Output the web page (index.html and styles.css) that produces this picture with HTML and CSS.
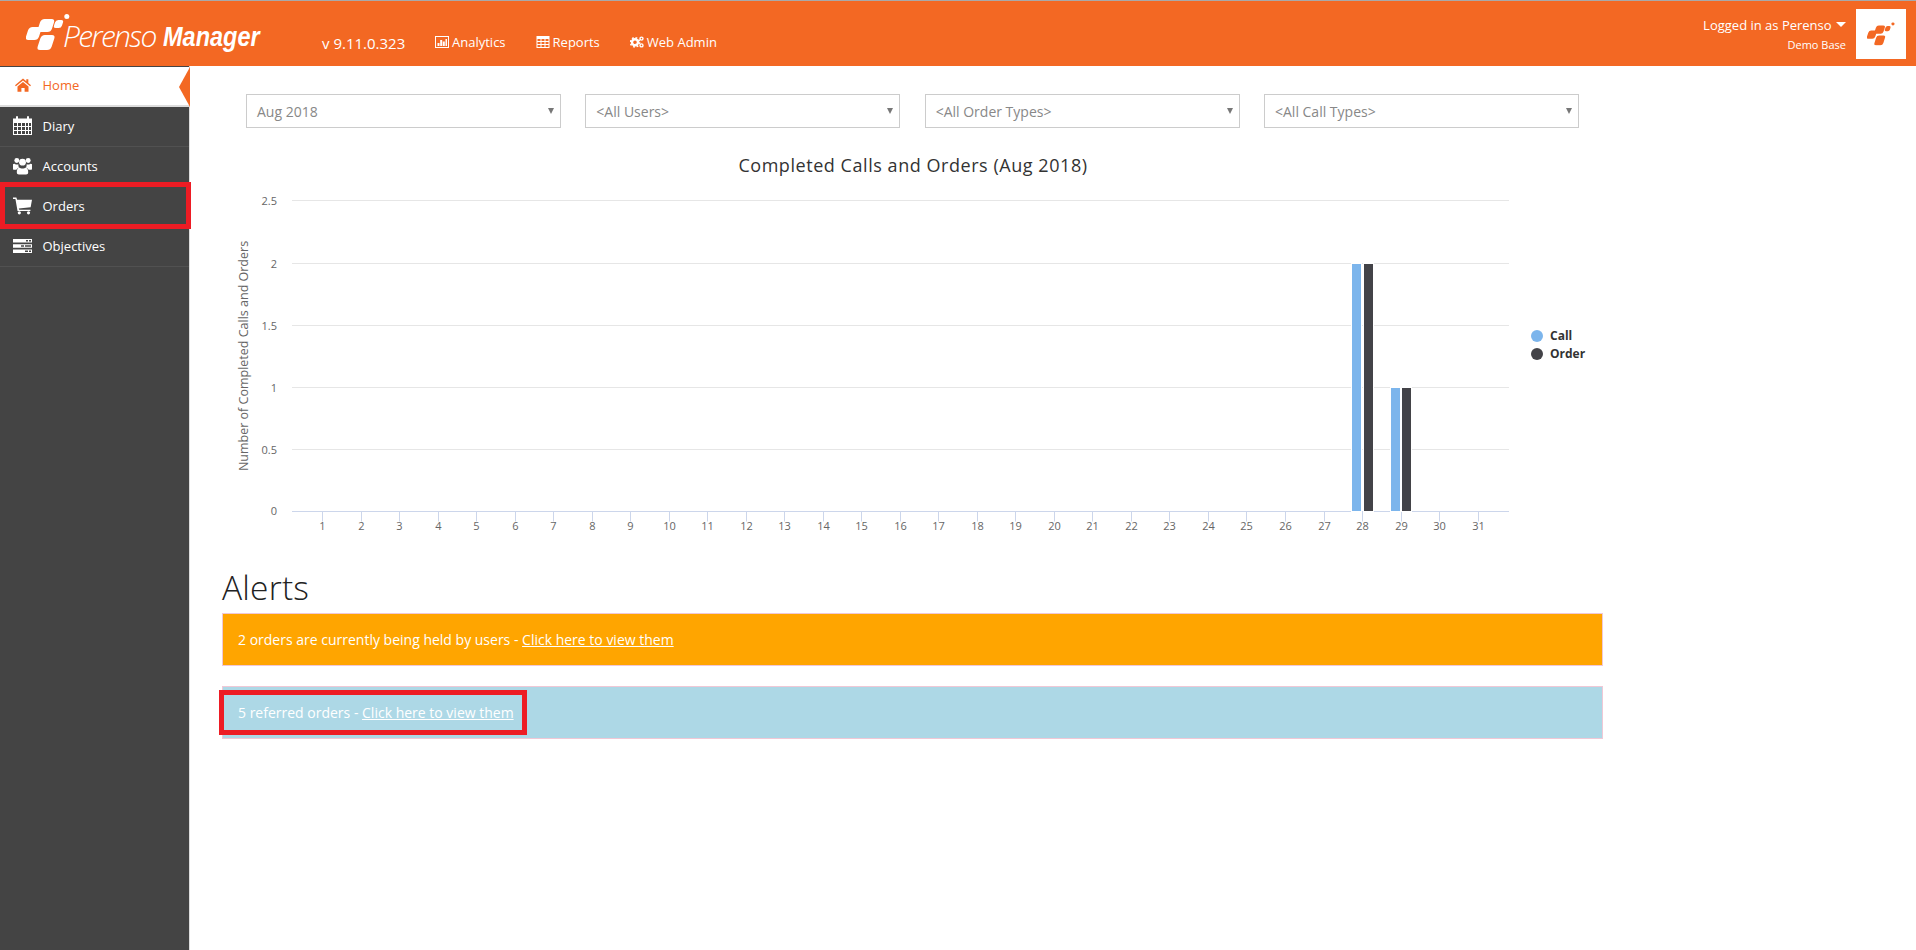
FILE: index.html
```html
<!DOCTYPE html>
<html lang="en">
<head>
<meta charset="utf-8">
<title>Perenso Manager</title>
<link rel="stylesheet" href="styles.css">
</head>
<body>
<svg class="defs" aria-hidden="true">
  <symbol id="mark" viewBox="0 0 44 37">
    <g fill="currentColor">
      <rect x="-6.500" y="-6.500" width="13" height="13" rx="3.500" transform="translate(7.500 19.500) skewX(-18)"/>
      <rect x="-7" y="-6.500" width="14" height="13" rx="3.500" transform="translate(20 11.500) skewX(-18)"/>
      <rect x="-7" y="-7.500" width="14" height="15" rx="3.500" transform="translate(20 28.500) skewX(-18)"/>
      <rect x="-4" y="-4" width="8" height="8" rx="2.500" transform="translate(32.500 10) skewX(-18)"/>
      <circle cx="40.800" cy="2.500" r="2.500"/>
    </g>
  </symbol>
</svg>

<header class="topbar">
  <div class="brand">
    <svg class="brand-mark" viewBox="0 0 44 37"><use href="#mark"/></svg>
    <span class="brand-thin">Perenso</span>
    <span class="brand-bold">Manager</span>
  </div>
  <span class="version">v 9.11.0.323</span>
  <nav class="topnav">
    <a class="topnav-item">
      <svg class="topnav-icon" viewBox="0 0 14 12"><path class="ico-w" fill-rule="evenodd" d="M0 0h14v12H0zM1 1v10h12V1z"/><path class="ico-w" d="M2.500 7h2v3h-2zM5.200 4h2v6h-2zM7.800 5.500h2V10h-2zM10.500 3h1.500v7h-1.500z"/></svg>
      Analytics
    </a>
    <a class="topnav-item">
      <svg class="topnav-icon" viewBox="0 0 13 12"><path class="ico-w" fill-rule="evenodd" d="M0 0h13v12H0zM1 3v2h3V3zM5 3v2h3V3zM9 3v2h3V3zM1 6v2h3V6zM5 6v2h3V6zM9 6v2h3V6zM1 9v2h3V9zM5 9v2h3V9zM9 9v2h3V9z"/></svg>
      Reports
    </a>
    <a class="topnav-item">
      <svg class="topnav-icon" viewBox="0 0 14 12"><circle class="ico-ring" cx="5" cy="6.300" r="3" stroke-width="2.400"/><circle class="ico-dash" cx="5" cy="6.300" r="4.600" stroke-width="1.600"/><circle class="ico-ring" cx="11.500" cy="2.600" r="1.500" stroke-width="1.400"/><circle class="ico-ring" cx="11.500" cy="9.400" r="1.500" stroke-width="1.400"/></svg>
      Web Admin
    </a>
  </nav>
  <div class="account">
    <div class="account-text">
      <div class="account-user">Logged in as Perenso <span class="caret"></span></div>
      <div class="account-base">Demo Base</div>
    </div>
    <div class="account-logo"><svg class="account-mark" viewBox="0 0 44 37"><use href="#mark"/></svg></div>
  </div>
</header>

<div class="shell">
  <aside class="sidebar">
    <a class="side-item side-item-active">
      <svg class="side-icon side-icon-home" viewBox="0 0 18 15"><path d="M9 .3 0 7.800l1 1.200L9 2.500 17 9l1-1.200-3-2.500V1h-2.300v2.400zM2.800 9.200V15h4.400v-4.200h3.600V15h4.400V9.200L9 4.100z"/></svg>
      <span>Home</span>
    </a>
    <a class="side-item">
      <svg class="side-icon side-icon-tall" viewBox="0 0 19 19"><path fill-rule="evenodd" d="M0 2.500h3V1a1 1 0 0 1 2 0v1.500h9V1a1 1 0 0 1 2 0v1.500h3V19H0zM1 7v3h3V7zM5 7v3h3V7zM9 7v3h3V7zM13 7v3h2V7zM16 7v3h2V7zM1 11v3h3v-3zM5 11v3h3v-3zM9 11v3h3v-3zM13 11v3h2v-3zM16 11v3h2v-3zM1 15v3h3v-3zM5 15v3h3v-3zM9 15v3h3v-3zM13 15v3h2v-3zM16 15v3h2v-3z"/></svg>
      <span>Diary</span>
    </a>
    <a class="side-item">
      <svg class="side-icon" viewBox="0 0 20 18"><circle cx="4" cy="3.200" r="2.600"/><circle cx="16" cy="3.200" r="2.600"/><circle cx="10" cy="5" r="3.600"/><path d="M0 7.200C.5 6.500 1.500 6.500 2 6.800c.7.400 1.300.500 2.200.500.5 0 1 0 1.500-.2C5.500 8.500 5.800 9.800 6.500 10.500 5 11 4 12 3.500 13H1c-1 0-1-1-1-2zM20 7.200c-.5-.7-1.500-.7-2-.4-.7.400-1.300.500-2.200.500-.5 0-1 0-1.500-.2.200 1.400-.1 2.700-.8 3.400 1.500.5 2.500 1.500 3 2.500H19c1 0 1-1 1-2z"/><path d="M6.500 10.600c1 .8 2.100 1.100 3.500 1.100s2.500-.3 3.500-1.100c1.800.6 2.500 2.400 2.500 5 0 1.400-.9 2.400-2.200 2.400H6.200C4.900 18 4 17 4 15.600c0-2.600.7-4.400 2.500-5z"/></svg>
      <span>Accounts</span>
    </a>
    <a class="side-item">
      <svg class="side-icon" viewBox="0 0 18 16"><path d="M0 0h3.200l.7 2H18l-1.300 7.300-11.200 1 .4 1.200H16.500v1.200H4.300L2.300 1.300H0z"/><circle cx="6" cy="14.500" r="1.500"/><circle cx="14.700" cy="14.500" r="1.500"/></svg>
      <span>Orders</span>
    </a>
    <a class="side-item">
      <svg class="side-icon" viewBox="0 0 19 14"><path fill-rule="evenodd" d="M0 0h19v3.600H0zM13 1v1.500h2V1zM16 1v1.500h2V1zM0 5.200h19v3.600H0zM8 6.200v1.500h3V6.200zM12 6.200v1.500h6V6.200zM0 10.400h19V14H0zM12 11.400v1.500h3v-1.500zM16 11.400v1.500h2v-1.500z"/></svg>
      <span>Objectives</span>
    </a>
    <div class="side-highlight"></div>
  </aside>

  <main class="content">
    <div class="filters">
      <div class="select">Aug 2018</div>
      <div class="select">&lt;All Users&gt;</div>
      <div class="select">&lt;All Order Types&gt;</div>
      <div class="select">&lt;All Call Types&gt;</div>
    </div>

    <svg class="chart" viewBox="0 0 1381 400" width="1381" height="400">
      <text class="chart-title" x="691" y="24" text-anchor="middle">Completed Calls and Orders (Aug 2018)</text>
      <text class="axis-title" transform="translate(26 208) rotate(-90)" text-anchor="middle">Number of Completed Calls and Orders</text>
      <g class="grid">
        <path d="M70 52.500H1287M70 115.500H1287M70 177.500H1287M70 239.500H1287M70 301.500H1287"/>
      </g>
      <g class="ylabels" text-anchor="end">
        <text x="55" y="57">2.5</text><text x="55" y="120">2</text><text x="55" y="182">1.5</text><text x="55" y="244">1</text><text x="55" y="306">0.5</text><text x="55" y="367">0</text>
      </g>
      <path class="axis" d="M70 363.500H1287"/>
      <g id="ticks" class="ticks"></g>
      <g class="xlabels" id="xlabels" text-anchor="middle"></g>
      <g class="bars">
        <rect class="bar-call" x="1129.500" y="115.500" width="10" height="248"/>
        <rect class="bar-order" x="1141.500" y="115.500" width="10" height="248"/>
        <rect class="bar-call" x="1168.500" y="239.500" width="10" height="124"/>
        <rect class="bar-order" x="1179.500" y="239.500" width="10" height="124"/>
      </g>
      <circle class="dot-call" cx="1315" cy="188" r="6"/>
      <circle class="dot-order" cx="1315" cy="206" r="6"/>
      <text class="legend" x="1328" y="192">Call</text>
      <text class="legend" x="1328" y="210">Order</text>
    </svg>

    <h2 class="alerts-title">Alerts</h2>
    <div class="alert alert-held">2 orders are currently being held by users - <a class="alert-link">Click here to view them</a></div>
    <div class="alert alert-referred">5 referred orders - <a class="alert-link">Click here to view them</a>
      <div class="alert-highlight"></div>
    </div>
  </main>
</div>
<script src="chart.js"></script>
</body>
</html>
```

FILE: styles.css
```css
* { box-sizing: border-box; }
html, body { margin: 0; height: 100%; }
body {
  font-family: "Open Sans", "Liberation Sans", sans-serif;
  font-size: 13px;
  color: #333;
  background: #fff;
  display: flex;
  flex-direction: column;
  overflow: hidden;
}
.defs { width: 0; height: 0; position: absolute; }

.topbar {
  height: 66px;
  flex: none;
  background: #f36823;
  border-top: 1px solid #a9a9a9;
  display: flex;
  align-items: center;
  color: #fff;
  padding-right: 10px;
}
.brand {
  width: 322px;
  flex: none;
  display: flex;
  align-items: center;
  padding-left: 26px;
  height: 100%;
  color: #fff;
}
.brand-mark { width: 44px; height: 37px; flex: none; margin-top: -3px; margin-right: -7px; }
.brand-thin {
  font-family: "Open Sans", sans-serif;
  font-weight: 300;
  font-style: italic;
  font-size: 30px;
  letter-spacing: -1.700px;
  margin-top: 3px;
}
.brand-bold {
  font-family: "Liberation Sans", sans-serif;
  font-weight: 700;
  font-style: italic;
  font-size: 27px;
  margin-left: 7px;
  margin-top: 7px;
  display: inline-block;
  transform: scaleX(.87);
  transform-origin: left center;
}
.version { font-size: 15px; margin-top: 19px; width: 113px; flex: none; white-space: nowrap; }
.topnav { display: flex; gap: 30px; margin-top: 17px; }
.topnav-item { display: flex; align-items: center; gap: 3px; font-size: 13px; white-space: nowrap; }
.topnav-icon { width: 14px; height: 12px; flex: none; }
.ico-w { fill: #fff; }
.ico-ring { fill: none; stroke: #fff; }
.ico-dash { fill: none; stroke: #fff; stroke-dasharray: 1.800 1.800; }

.account { margin-left: auto; display: flex; align-items: center; gap: 10px; }
.account-text { text-align: right; }
.account-user { font-size: 13px; line-height: 18px; white-space: nowrap; }
.caret {
  display: inline-block;
  width: 0; height: 0;
  border-left: 5px solid transparent;
  border-right: 5px solid transparent;
  border-top: 5px solid #fff;
  vertical-align: 3px;
  margin-left: 1px;
}
.account-base { font-size: 11px; line-height: 15px; margin-top: 3px; }
.account-logo {
  width: 50px; height: 50px;
  background: #fff;
  color: #f36823;
  display: flex;
  align-items: center;
  justify-content: center;
}
.account-mark { width: 28px; height: 24px; }

.shell { flex: 1; display: flex; min-height: 0; }
.sidebar {
  width: 190px;
  flex: none;
  background: #444;
  border-right: 1px solid #ddd;
  position: relative;
}
.side-item {
  height: 40px;
  display: flex;
  align-items: center;
  gap: 10.500px;
  padding-left: 13px;
  padding-bottom: 2px;
  color: #fff;
  font-size: 13px;
  border-bottom: 1px solid #515151;
  fill: #fff;
}
.side-icon { width: 19px; height: 18px; flex: none; }
.side-icon-tall { height: 19px; }
.side-icon-home { width: 16px; height: 14px; margin: 0 1.500px; }
.side-item-active {
  height: 41px;
  background: #fff;
  color: #f36823;
  fill: #f36823;
  border-top: 1px solid #444;
  border-bottom: 2px solid #ddd;
  position: relative;
}
.side-item-active::after {
  content: "";
  position: absolute;
  right: -1px;
  top: 0;
  bottom: -2px;
  width: 11px;
  background: #f36823;
  clip-path: polygon(0 50%, 100% 0, 100% 100%);
}
.side-highlight {
  position: absolute;
  left: 0;
  top: 116px;
  width: 191px;
  height: 47px;
  border: 5px solid #ed1c24;
}

.content { flex: 1; padding: 28px 0 0 32px; position: relative; width: 0; }
.filters { display: flex; gap: 24.330px; margin-left: 24px; }
.select {
  width: 315px;
  height: 34px;
  border: 1px solid #ccc;
  color: #888;
  font-size: 14px;
  line-height: 34px;
  padding-left: 10px;
  position: relative;
}
.select::after {
  content: "";
  position: absolute;
  right: 6px;
  top: 13px;
  border-left: 3px solid transparent;
  border-right: 3px solid transparent;
  border-top: 6px solid #777;
}

.chart { display: block; margin-top: 20px; overflow: visible; }
.chart text { font-family: "Open Sans", sans-serif; }
.chart .chart-title { font-size: 18px; fill: #333; letter-spacing: .55px; }
.chart .axis-title { font-size: 12.500px; fill: #666; }
.grid path { stroke: #e6e6e6; stroke-width: 1; fill: none; }
.axis { stroke: #ccd6eb; stroke-width: 1; fill: none; }
.ticks path { stroke: #ccd6eb; stroke-width: 1; fill: none; }
.chart .ylabels text, .chart .xlabels text { font-size: 11px; fill: #666; }
.bar-call { fill: #7cb5ec; stroke: #fff; stroke-width: 1; }
.bar-order { fill: #434348; stroke: #fff; stroke-width: 1; }
.dot-call { fill: #7cb5ec; }
.dot-order { fill: #434348; }
.chart .legend { font-size: 12px; font-weight: 700; fill: #333; }

.alerts-title {
  font-size: 33.500px;
  font-weight: 300;
  letter-spacing: .2px;
  line-height: 40px;
  margin: 19px 0 0;
  color: #222;
}
.alert {
  width: 1381px;
  height: 53px;
  border: 1px solid #f0c8d6;
  color: #fff;
  font-size: 14px;
  line-height: 51px;
  padding-left: 15px;
  position: relative;
}
.alert-held { margin-top: 6px; background: #ffa500; }
.alert-referred { margin-top: 20px; background: #add8e6; }
.alert-link { text-decoration: underline; color: #fff; }
.alert-highlight {
  position: absolute;
  left: -4px;
  top: 3px;
  width: 308px;
  height: 45px;
  border: 5px solid #ed1c24;
}
```

FILE: chart.js
```js
var ns = "http://www.w3.org/2000/svg";
var ticks = document.getElementById("ticks");
var labels = document.getElementById("xlabels");
for (var i = 0; i < 31; i++) {
  var x = Math.round(100 + i * 38.52) + 0.5;
  var t = document.createElementNS(ns, "path");
  t.setAttribute("d", "M" + x + " 363.5v10");
  ticks.appendChild(t);
  var l = document.createElementNS(ns, "text");
  l.setAttribute("x", x);
  l.setAttribute("y", 382);
  l.textContent = i + 1;
  labels.appendChild(l);
}
```
